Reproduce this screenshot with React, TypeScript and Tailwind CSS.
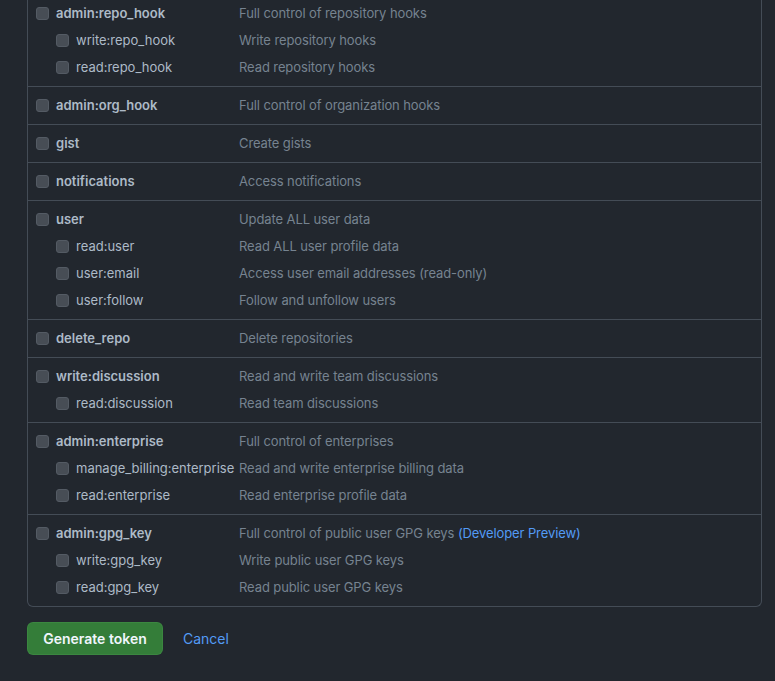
type Scope = { name: string; desc: string; preview?: boolean }
type Group = { parent: Scope; children?: Scope[] }

const groups: Group[] = [
  {
    parent: { name: 'admin:repo_hook', desc: 'Full control of repository hooks' },
    children: [
      { name: 'write:repo_hook', desc: 'Write repository hooks' },
      { name: 'read:repo_hook', desc: 'Read repository hooks' },
    ],
  },
  { parent: { name: 'admin:org_hook', desc: 'Full control of organization hooks' } },
  { parent: { name: 'gist', desc: 'Create gists' } },
  { parent: { name: 'notifications', desc: 'Access notifications' } },
  {
    parent: { name: 'user', desc: 'Update ALL user data' },
    children: [
      { name: 'read:user', desc: 'Read ALL user profile data' },
      { name: 'user:email', desc: 'Access user email addresses (read-only)' },
      { name: 'user:follow', desc: 'Follow and unfollow users' },
    ],
  },
  { parent: { name: 'delete_repo', desc: 'Delete repositories' } },
  {
    parent: { name: 'write:discussion', desc: 'Read and write team discussions' },
    children: [{ name: 'read:discussion', desc: 'Read team discussions' }],
  },
  {
    parent: { name: 'admin:enterprise', desc: 'Full control of enterprises' },
    children: [
      { name: 'manage_billing:enterprise', desc: 'Read and write enterprise billing data' },
      { name: 'read:enterprise', desc: 'Read enterprise profile data' },
    ],
  },
  {
    parent: { name: 'admin:gpg_key', desc: 'Full control of public user GPG keys', preview: true },
    children: [
      { name: 'write:gpg_key', desc: 'Write public user GPG keys' },
      { name: 'read:gpg_key', desc: 'Read public user GPG keys' },
    ],
  },
]

function Box() {
  return <span className="block w-[13px] h-[13px] rounded-[3px] bg-[#474d55] border border-[#545b64] shrink-0" />
}

function Row({ scope, child }: { scope: Scope; child?: boolean }) {
  return (
    <div className="flex items-center h-[21px]">
      <div className={`flex items-center gap-[7px] w-[203px] shrink-0 ${child ? 'pl-[20px]' : ''}`}>
        <Box />
        <span className={child ? 'text-[#adbac7]' : 'font-semibold text-[#adbac7]'}>{scope.name}</span>
      </div>
      <span className="text-[#768390] whitespace-nowrap tracking-[-0.1px]">
        {scope.desc}
        {scope.preview && <span className="text-[#539bf5]"> (Developer Preview)</span>}
      </span>
    </div>
  )
}

export default function App() {
  return (
    <div
      className="min-h-[681px] bg-[#22272e] overflow-hidden text-[13px]"
      style={{ fontFamily: "'Inter', 'Liberation Sans', sans-serif" }}
    >
      <div className="pl-[27px] pr-[13px] -mt-[5px]">
        <div className="border border-[#444c56] rounded-b-[6px] border-t-0">
          {groups.map((g, i) => (
            <div
              key={g.parent.name}
              className={`flex flex-col gap-[6px] py-[8px] pl-[8px] ${i < groups.length - 1 ? 'border-b border-[#444c56]' : ''}`}
            >
              <Row scope={g.parent} />
              {g.children?.map((c) => <Row key={c.name} scope={c} child />)}
            </div>
          ))}
        </div>
        <div className="flex items-center gap-[20px] mt-[15px]">
          <button className="h-[33px] w-[136px] rounded-[6px] bg-[#347d39] border border-[#46954a]/40 text-[14px] font-semibold text-[#f0f6fc]">
            Generate token
          </button>
          <span className="text-[14px] text-[#539bf5]">Cancel</span>
        </div>
      </div>
    </div>
  )
}
